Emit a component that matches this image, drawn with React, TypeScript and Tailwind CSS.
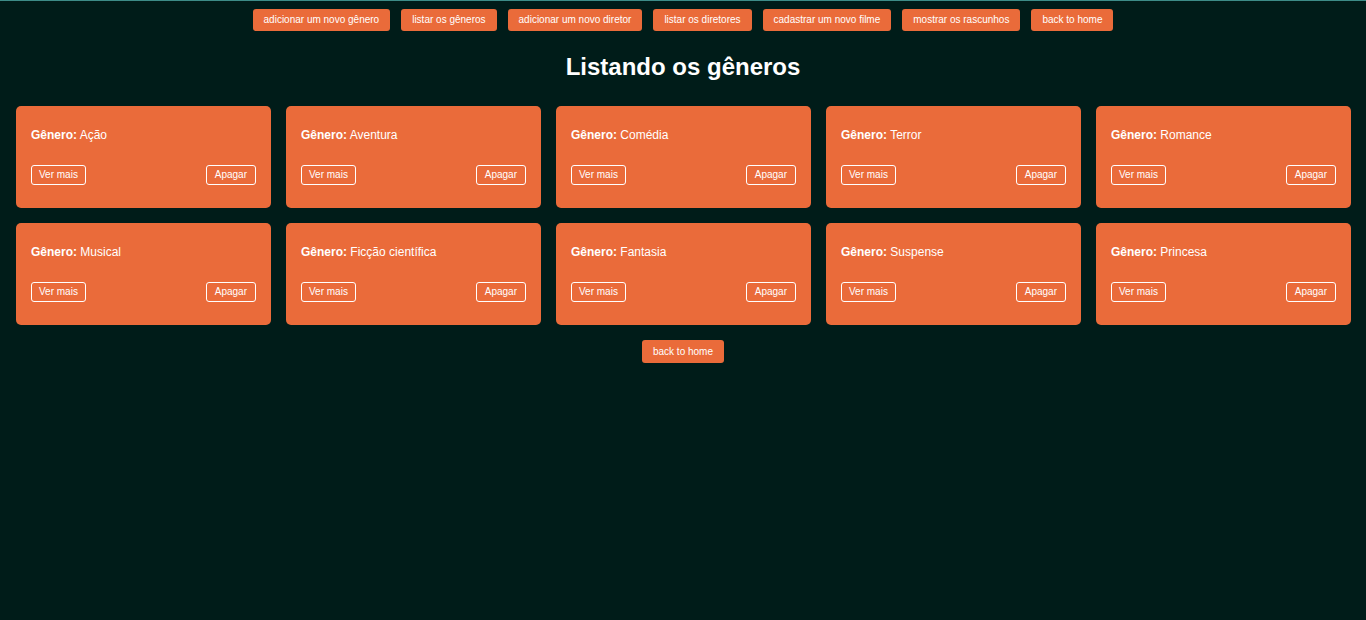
import React from "react";

const navItems = [
  "adicionar um novo gênero",
  "listar os gêneros",
  "adicionar um novo diretor",
  "listar os diretores",
  "cadastrar um novo filme",
  "mostrar os rascunhos",
  "back to home",
];

const genres = [
  "Ação",
  "Aventura",
  "Comédia",
  "Terror",
  "Romance",
  "Musical",
  "Ficção científica",
  "Fantasia",
  "Suspense",
  "Princesa",
];

export default function App() {
  return (
    <div
      className="min-h-[620px] bg-[#001c19] border-t border-[#3d8c88] text-white"
      style={{ fontFamily: '"Liberation Sans", Arial, sans-serif' }}
    >
      <nav className="flex justify-center gap-[11px] pt-[8px]">
        {navItems.map((n) => (
          <button
            key={n}
            className="h-[22px] px-[11px] rounded-[3px] bg-[#ea6b3a] text-[10px] text-white leading-none"
          >
            {n}
          </button>
        ))}
      </nav>
      <h1 className="text-center text-[24px] font-bold leading-none mt-[24px] mb-[27px] text-white">
        Listando os gêneros
      </h1>
      <div className="grid grid-cols-5 gap-[15px] pl-[16px] pr-[15px]">
        {genres.map((g) => (
          <div
            key={g}
            className="h-[102px] rounded-[5px] bg-[#ea6b3a] px-[15px] pt-[22px] flex flex-col"
          >
            <p className="text-[12px] leading-[14px]">
              <span className="font-bold">Gênero:</span> {g}
            </p>
            <div className="flex justify-between mt-[23px]">
              <button className="h-[20px] px-[7px] border border-white rounded-[3px] text-[10px] leading-none text-white">
                Ver mais
              </button>
              <button className="h-[20px] px-[8px] border border-white rounded-[3px] text-[10px] leading-none text-white">
                Apagar
              </button>
            </div>
          </div>
        ))}
      </div>
      <div className="flex justify-center mt-[15px]">
        <button className="h-[23px] px-[11px] rounded-[3px] bg-[#ea6b3a] text-[10px] text-white leading-none">
          back to home
        </button>
      </div>
    </div>
  );
}
